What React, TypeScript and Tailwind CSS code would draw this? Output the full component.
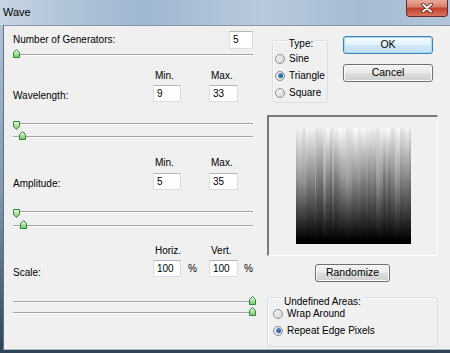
import React from "react";

type ThumbSpec = { left: number; down?: boolean };

// little green slider thumb, drawn as a pentagon
function Thumb({ left, down }: ThumbSpec) {
  return (
    <svg
      width="7"
      height="9"
      viewBox="0 0 7 9"
      className={down ? "absolute top-[3px]" : "absolute top-0"}
      style={{ left }}
    >
      <defs>
        <linearGradient id="thumbFill" x1="0" y1="0" x2="0" y2="1">
          <stop offset="0" stopColor="#effbe9" />
          <stop offset="1" stopColor="#74c565" />
        </linearGradient>
      </defs>
      <polygon
        points={down ? "0.5,0.5 6.5,0.5 6.5,5.5 3.5,8.5 0.5,5.5" : "0.5,8.5 6.5,8.5 6.5,3.5 3.5,0.5 0.5,3.5"}
        fill="url(#thumbFill)"
        stroke="#2f8a35"
        strokeWidth="1"
      />
    </svg>
  );
}

function Slider({ thumbs }: { thumbs: ThumbSpec[] }) {
  return (
    <div className="relative flex h-[10px] items-start pt-[5px]">
      <div className="h-px w-full bg-[#a4a4a4] shadow-[0_1px_0_#ffffff]" />
      {thumbs.map((t, i) => (
        <Thumb key={i} {...t} />
      ))}
    </div>
  );
}

function Field({ value, className }: { value: string; className: string }) {
  return (
    <div
      className={
        "flex h-[17px] items-center border border-[#dadde1] border-t-[#b4b7bc] bg-white pl-[3px] leading-[12px] " +
        className
      }
    >
      {value}
    </div>
  );
}

function Radio({ label, checked }: { label: string; checked?: boolean }) {
  return (
    <div className="flex h-[17px] items-center">
      <div className="flex h-[10px] w-[10px] items-center justify-center rounded-full border border-[#8b8e92] bg-gradient-to-br from-[#f6f6f6] to-[#d6d6d6]">
        {checked && (
          <div className="h-[5px] w-[5px] rounded-full bg-gradient-to-br from-[#5aa5e8] to-[#16467e]" />
        )}
      </div>
      <span className="ml-[4px] leading-[12px]">{label}</span>
    </div>
  );
}

function Button({ label, primary, className }: { label: string; primary?: boolean; className: string }) {
  return (
    <div
      className={
        "flex h-[18px] items-center justify-center rounded-[3px] border text-[10.5px] " +
        (primary
          ? "border-[#3c7fb1] bg-[linear-gradient(to_bottom,#f4fafe_0%,#e3f2fb_50%,#cfe7f7_51%,#c4e2f6_100%)] shadow-[inset_0_0_0_1px_#a9dcf5] "
          : "border-[#707070] bg-[linear-gradient(to_bottom,#f2f2f2_0%,#ebebeb_50%,#dddddd_51%,#cfcfcf_100%)] shadow-[inset_0_0_0_1px_#fbfbfb] ") +
        className
      }
    >
      {label}
    </div>
  );
}

// streaky white-to-black preview square
let seed = 11;
function rnd() {
  seed = (seed * 1103515245 + 12345) % 2147483648;
  return seed / 2147483648;
}
const strips: { x: number; w: number; top: number; mid: number; midAt: number }[] = [];
for (let x = 0; x < 115; ) {
  const w = 1 + Math.floor(rnd() * 4);
  strips.push({
    x,
    w,
    top: Math.round(228 + rnd() * 27),
    mid: Math.round(118 + rnd() * 38),
    midAt: 0.4 + rnd() * 0.1,
  });
  x += w;
}

function Preview() {
  return (
    <svg width="115" height="116" viewBox="0 0 115 116">
      <defs>
        {strips.map((s, i) => (
          <linearGradient key={i} id={"strip" + i} x1="0" y1="0" x2="0" y2="1">
            <stop offset="0" stopColor={`rgb(${s.top},${s.top},${s.top})`} />
            <stop offset={s.midAt} stopColor={`rgb(${s.mid},${s.mid},${s.mid})`} />
            <stop offset="0.97" stopColor="#000000" />
          </linearGradient>
        ))}
      </defs>
      {strips.map((s, i) => (
        <rect key={i} x={s.x} y="0" width={s.w} height="116" fill={`url(#strip${i})`} />
      ))}
    </svg>
  );
}

const grid = "grid grid-cols-[140px_28px_28px_29px_auto]";

export default function App() {
  return (
    <div className="flex h-[353px] w-[450px] flex-col overflow-hidden bg-[linear-gradient(to_bottom,#b7c9db_0%,#8196ab_55%,#2f4256_100%)] font-['Liberation_Sans',Arial,sans-serif] text-[10px] text-black">
      {/* title bar */}
      <div className="flex h-[25px] shrink-0 items-start justify-between bg-[linear-gradient(90deg,#c6d5e4_0%,#b2c5d9_14%,#9fb7d0_32%,#b9cadc_58%,#a6bcd3_80%,#b2c5da_100%)]">
        <span className="ml-[3px] mt-[6px] text-[11px] leading-[13px]">Wave</span>
        <div className="mr-[2px] flex h-[17px] w-[42px] items-center justify-center rounded-b-[4px] border border-t-0 border-[#6b2a22] bg-[linear-gradient(to_bottom,#e9a99a_0%,#d7826f_42%,#c2412f_52%,#d6735f_100%)]">
          <svg width="12" height="10" viewBox="0 0 12 10">
            <path d="M2 1.5 L10 8.5 M10 1.5 L2 8.5" stroke="#5a1d16" strokeWidth="3.6" strokeLinecap="round" />
            <path d="M2 1.5 L10 8.5 M10 1.5 L2 8.5" stroke="#ffffff" strokeWidth="2" strokeLinecap="round" />
          </svg>
        </div>
      </div>

      {/* dialog body */}
      <div className="mb-[3px] ml-[3px] flex flex-1 border-b border-l border-t border-b-[#aab6c2] border-l-[#5d7186] border-t-[#8798aa] bg-[#f0f0f0]">
        {/* left column */}
        <div className="ml-[9px] flex w-[240px] flex-col">
          <div className="mt-[5px] flex h-[18px] items-center justify-between">
            <span className="leading-[12px]">Number of Generators:</span>
            <Field value="5" className="h-[18px] w-[24px]" />
          </div>
          <Slider thumbs={[{ left: 0 }]} />

          <div className={grid + " mt-[11px] h-[12px] leading-[12px]"}>
            <span className="col-start-2 pl-[2px]">Min.</span>
            <span className="col-start-4 pl-[2px]">Max.</span>
          </div>
          <div className={grid + " mt-[3px] items-end"}>
            <span className="leading-[12px]">Wavelength:</span>
            <Field value="9" className="w-[28px]" />
            <span />
            <Field value="33" className="w-[29px]" />
          </div>
          <div className="mt-[16px]">
            <Slider thumbs={[{ left: 0, down: true }]} />
          </div>
          <div className="mt-[3px]">
            <Slider thumbs={[{ left: 6 }]} />
          </div>

          <div className={grid + " mt-[16px] h-[12px] leading-[12px]"}>
            <span className="col-start-2 pl-[2px]">Min.</span>
            <span className="col-start-4 pl-[2px]">Max.</span>
          </div>
          <div className={grid + " mt-[4px] items-end"}>
            <span className="leading-[12px]">Amplitude:</span>
            <Field value="5" className="w-[28px]" />
            <span />
            <Field value="35" className="w-[29px]" />
          </div>
          <div className="mt-[16px]">
            <Slider thumbs={[{ left: 0, down: true }]} />
          </div>
          <div className="mt-[4px]">
            <Slider thumbs={[{ left: 7 }]} />
          </div>

          <div className={grid + " mt-[15px] h-[12px] leading-[12px]"}>
            <span className="col-start-2 pl-[2px]">Horiz.</span>
            <span className="col-start-4 pl-[2px]">Vert.</span>
          </div>
          <div className={grid + " mt-[3px] items-end"}>
            <span className="mb-[-2px] leading-[12px]">Scale:</span>
            <Field value="100" className="w-[28px]" />
            <span className="mb-[2px] pl-[7px] leading-[12px]">%</span>
            <Field value="100" className="w-[29px]" />
            <span className="mb-[2px] pl-[6px] leading-[12px]">%</span>
          </div>
          <div className="mt-[19px]">
            <Slider thumbs={[{ left: 236 }]} />
          </div>
          <div className="mt-[1px]">
            <Slider thumbs={[{ left: 236 }]} />
          </div>
        </div>

        {/* right column */}
        <div className="ml-[14px] flex w-[171px] flex-col">
          <div className="flex items-start">
            <div className="ml-[5px] mt-[14px] flex w-[56px] flex-col rounded-[3px] border border-[#d5dfe5] pb-[1px] pl-[2px] shadow-[inset_1px_1px_0_#ffffff]">
              <span className="-mt-[3px] self-center bg-[#f0f0f0] px-[1px] leading-[12px]">Type:</span>
              <Radio label="Sine" />
              <Radio label="Triangle" checked />
              <Radio label="Square" />
            </div>
            <div className="ml-[15px] mt-[10px] flex flex-col">
              <Button label="OK" primary className="w-[90px]" />
              <Button label="Cancel" className="mt-[10px] w-[90px]" />
            </div>
          </div>

          <div className="mt-[12px] flex h-[141px] items-center justify-center border-b border-l-2 border-r border-t-2 border-b-white border-l-[#7b7b7b] border-r-white border-t-[#7b7b7b]">
            <Preview />
          </div>

          <div className="mt-[8px] flex justify-center">
            <Button label="Randomize" className="w-[75px]" />
          </div>

          <div className="mt-[15px] flex flex-col rounded-[3px] border border-[#d5dfe5] pb-[7px] pl-[5px] shadow-[inset_1px_1px_0_#ffffff]">
            <span className="-mt-[2px] ml-[10px] self-start bg-[#f0f0f0] px-[1px] leading-[12px]">Undefined Areas:</span>
            <div className="-mt-[3px] flex flex-col">
              <Radio label="Wrap Around" />
              <Radio label="Repeat Edge Pixels" checked />
            </div>
          </div>
        </div>
      </div>
    </div>
  );
}
